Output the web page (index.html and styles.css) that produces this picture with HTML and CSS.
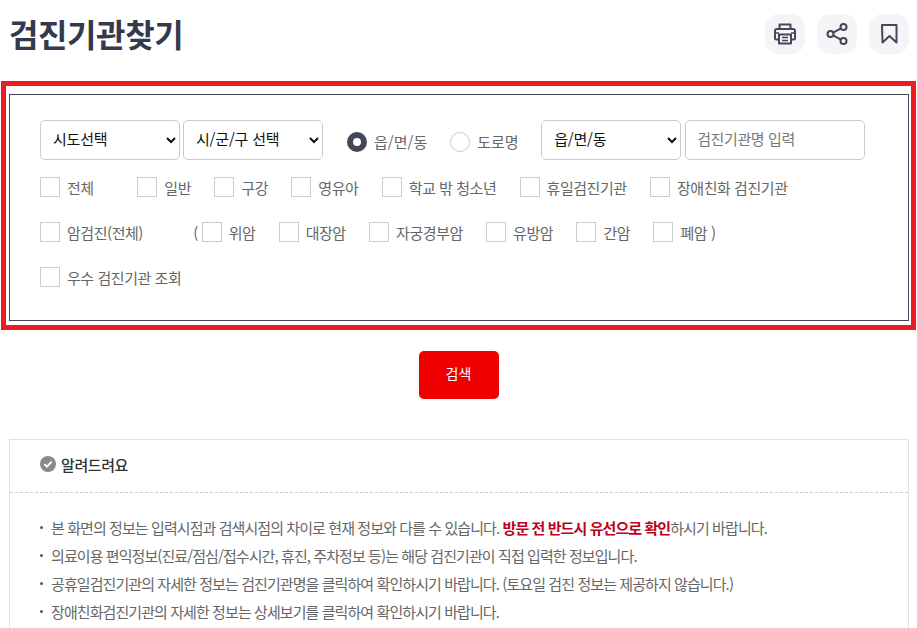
FILE: index.html
```html
<!DOCTYPE html>
<html lang="ko">
<head>
<meta charset="utf-8">
<title>검진기관찾기</title>
<link rel="stylesheet" href="styles.css">
</head>
<body>
<div class="page">
  <header class="head">
    <h1 class="title">검진기관찾기</h1>
    <div class="tools">
      <button class="tool" aria-label="인쇄"><svg width="24" height="24" viewBox="0 0 24 24" fill="none" stroke="#444659" stroke-width="2" stroke-linejoin="round"><path d="M6.5 7V2.5h11V7"/><path d="M6 17.5H3.5a1.5 1.5 0 0 1-1.5-1.500V9a2 2 0 0 1 2-2h16a2 2 0 0 1 2 2v7a1.500 1.500 0 0 1-1.500 1.500H18"/><path d="M6 12.500h12v9H6z"/><path d="M2 11h4M18 11h4M9 15.500h6M9 18.500h6" stroke-width="1.600"/></svg></button>
      <button class="tool" aria-label="공유"><svg width="24" height="24" viewBox="0 0 24 24" fill="none" stroke="#444659" stroke-width="2"><circle cx="18.500" cy="5" r="3"/><circle cx="5.500" cy="12" r="3"/><circle cx="18.500" cy="19" r="3"/><path d="M8.200 10.600l7.700-4.200M8.200 13.400l7.700 4.200"/></svg></button>
      <button class="tool" aria-label="저장"><svg width="24" height="24" viewBox="0 0 24 24" fill="none" stroke="#444659" stroke-width="2" stroke-linejoin="round"><path d="M5 3h14.500v17.500L12.500 14l-7 6.500z"/></svg></button>
    </div>
  </header>

  <section class="highlight">
    <form class="search">
      <div class="row-fields">
        <select class="field sel"><option>시도선택</option></select>
        <select class="field sel"><option>시/군/구 선택</option></select>
        <label class="opt opt-a"><input class="radio" type="radio" name="addr" checked><span>읍/면/동</span></label>
        <label class="opt opt-b"><input class="radio" type="radio" name="addr"><span>도로명</span></label>
        <select class="field sel"><option>읍/면/동</option></select>
        <input class="field text" type="text" placeholder="검진기관명 입력">
      </div>
      <div class="row-checks">
        <label class="chk wide-1"><input type="checkbox"><span>전체</span></label>
        <label class="chk"><input type="checkbox"><span>일반</span></label>
        <label class="chk"><input type="checkbox"><span>구강</span></label>
        <label class="chk"><input type="checkbox"><span>영유아</span></label>
        <label class="chk"><input type="checkbox"><span>학교 밖 청소년</span></label>
        <label class="chk"><input type="checkbox"><span>휴일검진기관</span></label>
        <label class="chk"><input type="checkbox"><span>장애친화 검진기관</span></label>
      </div>
      <div class="row-checks">
        <label class="chk wide-2"><input type="checkbox"><span>암검진(전체)</span></label>
        <span class="paren">(</span>
        <label class="chk"><input type="checkbox"><span>위암</span></label>
        <label class="chk"><input type="checkbox"><span>대장암</span></label>
        <label class="chk"><input type="checkbox"><span>자궁경부암</span></label>
        <label class="chk"><input type="checkbox"><span>유방암</span></label>
        <label class="chk"><input type="checkbox"><span>간암</span></label>
        <label class="chk"><input type="checkbox"><span>폐암 )</span></label>
      </div>
      <div class="row-checks">
        <label class="chk"><input type="checkbox"><span>우수 검진기관 조회</span></label>
      </div>
    </form>
  </section>

  <div class="actions"><button class="btn-search" type="button">검색</button></div>

  <section class="notice">
    <h2 class="notice-title"><svg width="16" height="16" viewBox="0 0 16 16"><circle cx="8" cy="8" r="8" fill="#8a8a8a"/><path d="M4.300 8.200l2.600 2.500 4.800-5" fill="none" stroke="#fff" stroke-width="1.800"/></svg>알려드려요</h2>
    <ul class="notice-list">
      <li>본 화면의 정보는 입력시점과 검색시점의 차이로 현재 정보와 다를 수 있습니다. <strong>방문 전 반드시 유선으로 확인</strong>하시기 바랍니다.</li>
      <li>의료이용 편익정보(진료/점심/접수시간, 휴진, 주차정보 등)는 해당 검진기관이 직접 입력한 정보입니다.</li>
      <li>공휴일검진기관의 자세한 정보는 검진기관명을 클릭하여 확인하시기 바랍니다. (토요일 검진 정보는 제공하지 않습니다.)</li>
      <li>장애친화검진기관의 자세한 정보는 상세보기를 클릭하여 확인하시기 바랍니다.</li>
    </ul>
  </section>
</div>
</body>
</html>
```
FILE: styles.css
```css
* { box-sizing: border-box; }
html, body { margin: 0; height: 628px; overflow: hidden; background: #fff; }
body { font-family: "Noto Sans CJK KR", "Noto Sans", sans-serif; color: #666; font-size: 15px; }
.page { width: 917px; }

.head { display: flex; justify-content: space-between; align-items: flex-start; height: 81px; padding: 14px 8px 0 10px; }
.title { margin: -2px 0 0 -1px; font-size: 32px; line-height: 42px; font-weight: 700; color: #333a4d; letter-spacing: -0.4px; }
.tools { display: flex; gap: 12px; }
.tool { width: 40px; height: 40px; padding: 0; border: 0; border-radius: 14px; background: #f5f5f7; display: flex; align-items: center; justify-content: center; }

.highlight { margin-left: 1px; width: 915px; height: 249px; border: 5px solid #ed1c24; padding: 8px 2px 4px 3px; }
.search { height: 100%; border: 1px solid #444659; padding: 25px 30px 0; }
.row-fields { display: flex; align-items: center; height: 40px; }
.field { height: 40px; border: 1px solid #ccc; border-radius: 5px; background: #fff; font-family: inherit; font-size: 15px; }
.sel { width: 140px; padding: 0 8px 4px; color: #111; margin-right: 3px; letter-spacing: -0.2px; }
.text { width: 180px; margin-left: 1px; padding: 0 11px 4px; color: #666; letter-spacing: -0.4px; }
.text::placeholder { color: #777; opacity: 1; }
.opt { display: flex; align-items: center; gap: 7px; margin-top: 3px; }
.opt-a { margin-left: 21px; }
.opt-b { margin-left: 23px; width: 91px; margin-right: 0; }
.radio { appearance: none; width: 20px; height: 20px; margin: 0; border: 1px solid #ccc; border-radius: 50%; background: #fff; }
.radio:checked { border: 6px solid #444659; }

.row-checks { display: flex; align-items: center; gap: 23.3px; height: 20px; margin-top: 25px; }
.row-fields + .row-checks { margin-top: 17px; }
.chk { display: flex; align-items: center; gap: 7px; white-space: nowrap; line-height: 20px; letter-spacing: -0.45px; }
.chk span { padding-top: 2px; }
.chk input { appearance: none; width: 20px; height: 20px; margin: 0; border: 1px solid #ccc; background: #fff; flex: none; }
.wide-1 { width: 74px; }
.wide-2 { width: 130px; }
.paren { margin-right: -20px; }

.actions { display: flex; justify-content: center; padding-top: 21px; }
.btn-search { width: 80px; height: 48px; border: 0; border-radius: 5px; background: #ee0000; color: #fff; font-family: inherit; font-size: 14px; padding: 0 0 4px; }

.notice { margin: 40px 0 0 9px; width: 900px; height: 260px; border: 1px solid #e2e2e2; }
.notice-title { display: flex; align-items: center; gap: 5px; height: 53px; margin: 0; padding: 0 30px 4px; border-bottom: 1px dashed #ccc; font-size: 15px; font-weight: 500; color: #333; letter-spacing: -0.4px; }
.notice-list { list-style: none; margin: 0; padding: 21px 30px 0; }
.notice-list li { position: relative; padding-left: 11px; line-height: 28px; letter-spacing: -0.92px; white-space: nowrap; }
.notice-list li::before { content: ""; position: absolute; left: 0; top: 12px; width: 3px; height: 3px; border-radius: 50%; background: #555; }
.notice-list strong { color: #c00020; font-weight: 700; }
```
